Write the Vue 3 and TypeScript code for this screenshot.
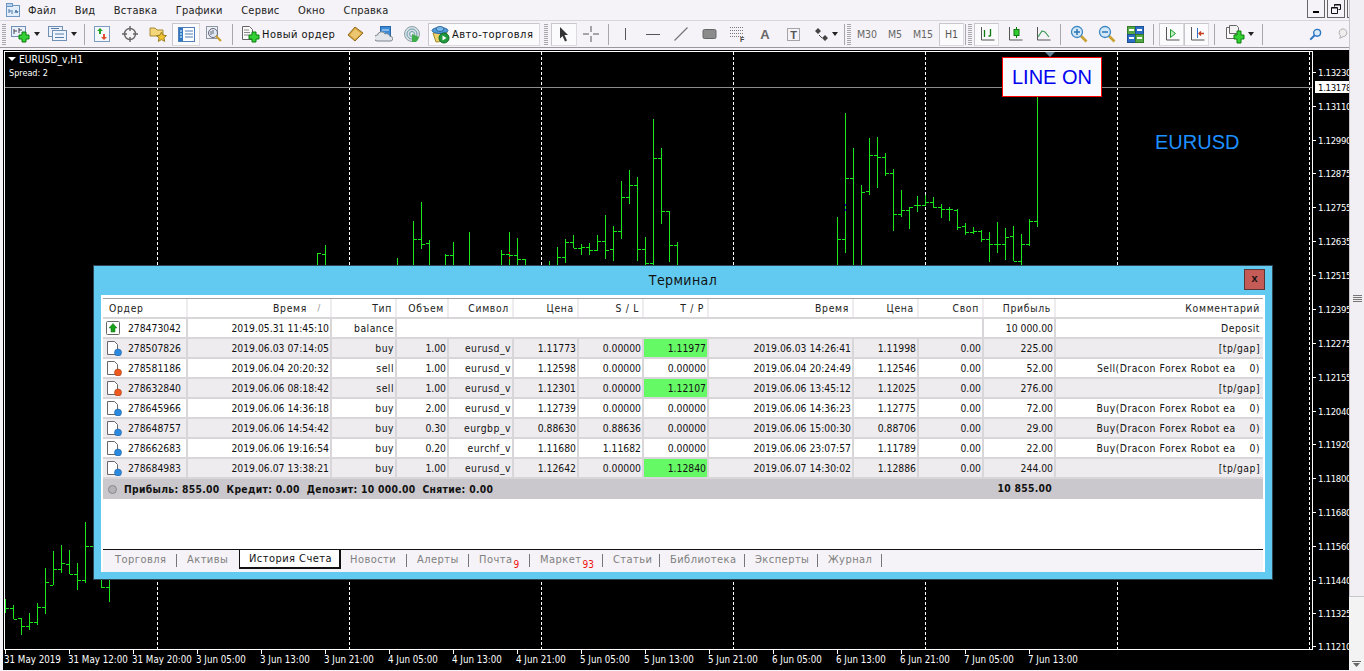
<script setup lang="ts">
const menu = ['Файл', 'Вид', 'Вставка', 'Графики', 'Сервис', 'Окно', 'Справка'];

// x, high, low, open, close (pixel places on the chart canvas)
type Bar = [number, number, number, number | null, number | null];
const bars: Bar[] = [
  [5, 599, 613, null, 608], [13, 605, 619, 608, 619], [21, 618, 635, 618, 626], [29, 613, 630, 626, 622],
  [37, 603, 625, 622, 607], [45, 568, 614, 607, 582], [53, 551, 585, 585, 569], [61, 545, 573, 569, 563],
  [69, 550, 574, 564, 574], [77, 563, 590, 574, 580], [85, 522, 583, 580, 546], [93, 530, 560, 546, null],
  [101, 570, 588, null, 587], [109, 570, 602, 587, null],
  [317, 253, 270, null, 253], [325, 245, 270, 254, null], [397, 258, 270, null, null],
  [413, 221, 270, null, 239], [421, 202, 249, 239, 244], [429, 240, 270, 243, null],
  [445, 254, 270, null, 255], [453, 242, 270, 255, null], [469, 232, 270, null, null],
  [501, 250, 270, null, 254], [509, 232, 270, 254, 255], [517, 238, 270, 255, 259], [525, 259, 270, 259, null],
  [549, 261, 270, null, null], [557, 247, 270, null, 257], [565, 239, 263, 257, 242], [573, 235, 248, 242, 248],
  [581, 244, 255, 248, 247], [589, 243, 255, 247, 250], [597, 235, 251, 250, 241], [605, 215, 259, 241, 250],
  [613, 226, 261, 249, 231], [621, 181, 239, 231, 197], [629, 170, 204, 197, 185], [637, 177, 261, 185, 249],
  [645, 237, 270, 249, 263], [653, 119, 270, 263, 158], [661, 148, 224, 158, 211], [669, 211, 262, 211, 245],
  [677, 242, 270, 245, null],
  [837, 217, 270, null, 239], [845, 113, 253, 239, 178], [853, 148, 270, 178, null], [861, 185, 270, null, 192],
  [869, 138, 195, 191, 155], [877, 137, 188, 155, 157], [885, 153, 176, 157, 173], [893, 169, 231, 173, 214],
  [901, 190, 217, 214, 210], [909, 207, 229, 210, 207], [917, 196, 212, 205, 205], [925, 195, 206, 205, 202],
  [933, 197, 208, 202, 207], [941, 204, 218, 207, 209], [949, 207, 221, 209, 209], [957, 209, 230, 210, 227],
  [965, 223, 235, 226, 232], [973, 227, 234, 232, 231], [981, 230, 242, 231, 239], [989, 232, 262, 239, 244],
  [997, 222, 253, 244, 244], [1005, 228, 260, 244, 237], [1013, 226, 261, 236, 261], [1021, 234, 270, 261, 244],
  [1029, 219, 246, 244, 221], [1037, 97, 227, 221, null],
];

const barPath = bars
  .map(([x, hi, lo, open, close]) => {
    const cx = x + 0.5;
    let d = `M${cx} ${hi}V${lo}`;
    if (open !== null) d += `M${x - 3} ${open + 0.5}H${x}`;
    if (close !== null) d += `M${x + 1} ${close + 0.5}H${x + 4}`;
    return d;
  })
  .join('');

const gridLines = [157, 349, 541, 733, 925, 1117, 1309];

const prices: [string, number][] = [
  ['1.13230', 72], ['1.13110', 106], ['1.12990', 140], ['1.12875', 173], ['1.12755', 207], ['1.12635', 241],
  ['1.12515', 275], ['1.12395', 309], ['1.12275', 343], ['1.12155', 377], ['1.12040', 411], ['1.11920', 444],
  ['1.11800', 478], ['1.11680', 512], ['1.11560', 546], ['1.11440', 580], ['1.11325', 613], ['1.11210', 646],
];

const times = [
  '31 May 2019', '31 May 12:00', '31 May 20:00', '3 Jun 05:00', '3 Jun 13:00', '3 Jun 21:00', '4 Jun 05:00',
  '4 Jun 13:00', '4 Jun 21:00', '5 Jun 05:00', '5 Jun 13:00', '5 Jun 21:00', '6 Jun 05:00', '6 Jun 13:00',
  '6 Jun 21:00', '7 Jun 05:00', '7 Jun 13:00',
];

const columns = [
  { label: 'Время', extra: '/' }, { label: 'Тип' }, { label: 'Объем' }, { label: 'Символ' }, { label: 'Цена' },
  { label: 'S / L' }, { label: 'T / P' }, { label: 'Время' }, { label: 'Цена' }, { label: 'Своп' },
  { label: 'Прибыль' }, { label: 'Комментарий' },
];

interface Deal {
  order: string;
  time: string;
  type: string;
  volume: string;
  symbol: string;
  price: string;
  sl: string;
  tp: string;
  closeTime: string;
  closePrice: string;
  swap: string;
  profit: string;
  comment: string;
  tpHit?: boolean;
}

const ea = (side: string) => `${side}(Dracon Forex Robot ea    0)`;

const deals: Deal[] = [
  { order: '278507826', time: '2019.06.03 07:14:05', type: 'buy', volume: '1.00', symbol: 'eurusd_v', price: '1.11773', sl: '0.00000', tp: '1.11977', closeTime: '2019.06.03 14:26:41', closePrice: '1.11998', swap: '0.00', profit: '225.00', comment: '[tp/gap]', tpHit: true },
  { order: '278581186', time: '2019.06.04 20:20:32', type: 'sell', volume: '1.00', symbol: 'eurusd_v', price: '1.12598', sl: '0.00000', tp: '0.00000', closeTime: '2019.06.04 20:24:49', closePrice: '1.12546', swap: '0.00', profit: '52.00', comment: ea('Sell') },
  { order: '278632840', time: '2019.06.06 08:18:42', type: 'sell', volume: '1.00', symbol: 'eurusd_v', price: '1.12301', sl: '0.00000', tp: '1.12107', closeTime: '2019.06.06 13:45:12', closePrice: '1.12025', swap: '0.00', profit: '276.00', comment: '[tp/gap]', tpHit: true },
  { order: '278645966', time: '2019.06.06 14:36:18', type: 'buy', volume: '2.00', symbol: 'eurusd_v', price: '1.12739', sl: '0.00000', tp: '0.00000', closeTime: '2019.06.06 14:36:23', closePrice: '1.12775', swap: '0.00', profit: '72.00', comment: ea('Buy') },
  { order: '278648757', time: '2019.06.06 14:54:42', type: 'buy', volume: '0.30', symbol: 'eurgbp_v', price: '0.88630', sl: '0.88636', tp: '0.00000', closeTime: '2019.06.06 15:00:30', closePrice: '0.88706', swap: '0.00', profit: '29.00', comment: ea('Buy') },
  { order: '278662683', time: '2019.06.06 19:16:54', type: 'buy', volume: '0.20', symbol: 'eurchf_v', price: '1.11680', sl: '1.11682', tp: '0.00000', closeTime: '2019.06.06 23:07:57', closePrice: '1.11789', swap: '0.00', profit: '22.00', comment: ea('Buy') },
  { order: '278684983', time: '2019.06.07 13:38:21', type: 'buy', volume: '1.00', symbol: 'eurusd_v', price: '1.12642', sl: '0.00000', tp: '1.12840', closeTime: '2019.06.07 14:30:02', closePrice: '1.12886', swap: '0.00', profit: '244.00', comment: '[tp/gap]', tpHit: true },
];

const tabs = [
  { label: 'Торговля', width: 75, pad: 12 },
  { label: 'Активы', width: 61, pad: 9, plain: true },
  { label: 'История Счета', width: 102, pad: 9, active: true },
  { label: 'Новости', width: 67, pad: 9 },
  { label: 'Алерты', width: 62, pad: 9 },
  { label: 'Почта', width: 61, pad: 9, badge: '9' },
  { label: 'Маркет', width: 73, pad: 9, badge: '93' },
  { label: 'Статьи', width: 57, pad: 9 },
  { label: 'Библиотека', width: 85, pad: 9 },
  { label: 'Эксперты', width: 73, pad: 9 },
  { label: 'Журнал', width: 64, pad: 9 },
];
</script>

<template>
  <div class="app">
    <div class="main">
      <div class="menubar">
        <svg class="app-icon" width="16" height="16" viewBox="0 0 16 16">
          <rect x="1.5" y="3.5" width="13" height="11" fill="#e4eefa" stroke="#6f97c4" />
          <rect x="1.5" y="1.5" width="6" height="3" fill="#b9d2ee" stroke="#6f97c4" />
          <path d="M4 11V7M4 9h2M7 12V8M10 11l1-3 1 3 1-2" fill="none" stroke="#4a74a6" />
        </svg>
        <span v-for="item in menu" :key="item" class="menu-item">{{ item }}</span>
        <div class="win-btns">
          <span class="win-btn"><svg width="8" height="8" viewBox="0 0 8 8"><path d="M1 6h6v2H1z" /></svg></span>
          <span class="win-btn"><svg width="10" height="10" viewBox="0 0 10 10"><path d="M3.5 2.5v-2h6v5h-2M.5 3.5h6v6h-6z M.5 4h6M3.5 1h6" fill="none" stroke="#111" /></svg></span>
          <span class="win-btn clipped"></span>
        </div>
      </div>

      <div class="toolbar">
        <i class="grip first"></i>
        <span class="tb drop">
          <svg width="20" height="18" viewBox="0 0 20 18"><rect x=".5" y="1.5" width="14" height="10" fill="#eaf1fa" stroke="#6f8fb4" /><path d="M3 4v5M3 6h3M8 3v5M8 5h3" stroke="#445" fill="none" /><path d="M11 7h4v3h3v4h-3v3h-4v-3H8v-4h3z" fill="#33d133" stroke="#0c7c0c" /></svg>
          <i class="caret"></i>
        </span>
        <span class="tb drop second">
          <svg width="20" height="18" viewBox="0 0 20 18"><rect x=".5" y="1.5" width="14" height="10" fill="#eaf1fa" stroke="#6f8fb4" /><rect x="4.5" y="5.5" width="14" height="10" fill="#eef4fb" stroke="#6f8fb4" /><path d="M3 3.5h8M7 9h9M7 12.500h9" stroke="#5a7ea8" fill="none" /></svg>
          <i class="caret"></i>
        </span>
        <i class="sep sep-a"></i>
        <span class="tb">
          <svg width="18" height="18" viewBox="0 0 18 18"><rect x="1.500" y="1.500" width="15" height="15" fill="#f4f7fc" stroke="#7d9cc2" /><path d="M6 9V6H4l3-3 3 3H8v3z" fill="#27a327" /><path d="M10 9v3H8l3 3 3-3h-2V9z" fill="#e0502a" /></svg>
        </span>
        <span class="tb">
          <svg width="18" height="18" viewBox="0 0 18 18"><circle cx="9" cy="9" r="5.500" fill="none" stroke="#666" stroke-width="1.400" /><path d="M9 1v5M9 12v5M1 9h5M12 9h5" stroke="#666" stroke-width="1.400" /></svg>
        </span>
        <span class="tb">
          <svg width="18" height="18" viewBox="0 0 18 18"><path d="M1 3h5l2 2h6v6H1z" fill="#f3d77a" stroke="#a98a35" /><path d="M12.500 7l1.500 3.200 3.500.4-2.600 2.300.8 3.500-3.200-1.800-3.200 1.800.8-3.500-2.600-2.300 3.500-.4z" fill="#f2c230" stroke="#9c7f1e" /></svg>
        </span>
        <span class="tb pressed">
          <svg width="17" height="17" viewBox="0 0 17 17"><rect x=".5" y="1.500" width="16" height="14" fill="#fff" stroke="#4f7fb8" /><rect x="1" y="2" width="4" height="13" fill="#2f79c4" /><path d="M7 5h8M7 8h8M7 11h8" stroke="#4f7fb8" /><path d="M2 5h2M2 8h2M2 11h2" stroke="#fff" /></svg>
        </span>
        <span class="tb">
          <svg width="18" height="18" viewBox="0 0 18 18"><rect x="1.500" y="1.500" width="11" height="12" fill="#eef1f6" stroke="#8d97a6" /><circle cx="8" cy="8" r="4.500" fill="#dfe9f5" stroke="#667" /><path d="M11 11l5 5" stroke="#c9a032" stroke-width="2.200" /><path d="M6 10V6M8 9V5" stroke="#667" /></svg>
        </span>
        <i class="sep sep-b"></i>
        <span class="tb order">
          <svg width="19" height="18" viewBox="0 0 19 18"><path d="M1.500 1.500h7l3 3v10h-10z" fill="#fbfbfb" stroke="#666" /><path d="M3 5h5M3 7.500h6M3 10h5" stroke="#888" /><path d="M11 7h4v3h3v4h-3v3h-4v-3H8v-4h3z" fill="#33d133" stroke="#0c7c0c" /></svg>
          <span class="tb-text">Новый ордер</span>
        </span>
        <span class="tb">
          <svg width="18" height="18" viewBox="0 0 18 18"><path d="M1 10l7-8 8 6-8 8z" fill="#d9a63e" stroke="#8d6a1d" /><path d="M3 10l5-6 6 4.500-6 5.500z" fill="#edc672" /></svg>
        </span>
        <span class="tb">
          <svg width="18" height="18" viewBox="0 0 18 18"><rect x="5.500" y="1.500" width="10" height="11" fill="#3c8ad6" stroke="#2467ad" /><path d="M7 5h7M7 8h3" stroke="#cfe4f8" /><path d="M2 16a3 3 0 0 1 .5-6 4 4 0 0 1 7.500-1 3.500 3.500 0 0 1 5 2.500 2.300 2.300 0 0 1 1 4.500z" fill="#e2e6ea" stroke="#7c858e" /></svg>
        </span>
        <span class="tb">
          <svg width="18" height="18" viewBox="0 0 18 18"><circle cx="9" cy="9" r="7.500" fill="#d6e0e4" stroke="#8ea0a8" /><circle cx="9" cy="9" r="5" fill="none" stroke="#6f9fb0" /><circle cx="9" cy="9" r="2.500" fill="#dfe9ec" stroke="#6f9fb0" /><path d="M9 9v8h4a8 8 0 0 0 3-5z" fill="#3fae4a" /></svg>
        </span>
        <span class="tb pressed auto">
          <svg width="19" height="19" viewBox="0 0 19 19"><path d="M2 8l14-1-2 9-9 1z" fill="#f0d268" stroke="#a08a2c" /><ellipse cx="9" cy="5.500" rx="8" ry="3" fill="#4f9bdc" stroke="#2c6aa3" /><ellipse cx="9" cy="4" rx="4" ry="2.500" fill="#7ab8ea" stroke="#2c6aa3" /><circle cx="13" cy="13" r="5" fill="#1f9a3c" stroke="#0f6a24" /><path d="M11.500 10.500v5l4-2.500z" fill="#fff" /></svg>
          <span class="tb-text">Авто-торговля</span>
        </span>
        <i class="grip grip-a"></i>
        <span class="tb pressed arrow">
          <svg width="14" height="18" viewBox="0 0 14 18"><path d="M3 2l8 8H7.500l2.500 5.500-2 1L5.500 11 3 13.500z" fill="#333" /></svg>
        </span>
        <span class="tb">
          <svg width="16" height="16" viewBox="0 0 16 16"><path d="M8 0v6M8 10v6M0 8h6M10 8h6" stroke="#555" /></svg>
        </span>
        <i class="sep sep-c"></i>
        <span class="tb draw">
          <svg width="16" height="16" viewBox="0 0 16 16"><path d="M8.500 2v12" stroke="#555" /></svg>
        </span>
        <span class="tb draw">
          <svg width="16" height="16" viewBox="0 0 16 16"><path d="M1 8.500h14" stroke="#555" /></svg>
        </span>
        <span class="tb draw">
          <svg width="16" height="16" viewBox="0 0 16 16"><path d="M1.500 14.500l13-13" stroke="#777" stroke-width="1.200" /></svg>
        </span>
        <span class="tb draw">
          <svg width="15" height="12" viewBox="0 0 15 12"><rect x="1" y="1.500" width="13" height="9" rx="1.500" fill="#8b8b8b" stroke="#666" /></svg>
        </span>
        <span class="tb draw">
          <svg width="16" height="16" viewBox="0 0 16 16"><path d="M1 1.500h13M1 4.500h13M1 7.500h13M1 10.500h13" stroke="#777" stroke-dasharray="1 1" /><text x="11" y="16" class="icon-f">F</text></svg>
        </span>
        <span class="tb draw"><span class="icon-a">A</span></span>
        <span class="tb draw">
          <svg width="15" height="15" viewBox="0 0 15 15"><rect x="1.500" y="1.500" width="12" height="12" fill="none" stroke="#555" stroke-dasharray="1 1" /><text x="7.500" y="12" class="icon-t">T</text></svg>
        </span>
        <span class="tb draw drop">
          <svg width="15" height="15" viewBox="0 0 15 15"><path d="M4 1l3 3-3 3-3-3zM11 8l3 3-3 3-3-3z" fill="#444" /><path d="M5 8l3 3" stroke="#444" /></svg>
          <i class="caret"></i>
        </span>
        <i class="sep sep-d"></i>
        <i class="grip grip-b"></i>
        <span class="tf">M30</span>
        <span class="tf">M5</span>
        <span class="tf">M15</span>
        <span class="tf pressed h1">H1</span>
        <i class="sep sep-e"></i>
        <i class="grip grip-c"></i>
        <span class="tb pressed view">
          <svg width="16" height="16" viewBox="0 0 16 16"><path d="M2.500 1v13h13" fill="none" stroke="#555" /><path d="M5.500 4v7M11.500 3v7M9.500 10h2" fill="none" stroke="#0c7c0c" stroke-width="1.300" /></svg>
        </span>
        <span class="tb view-b">
          <svg width="16" height="16" viewBox="0 0 16 16"><path d="M2.500 1v13h13" fill="none" stroke="#555" /><path d="M9.500 1v11" stroke="#0c7c0c" /><rect x="7" y="3.500" width="5" height="6" fill="#33c933" stroke="#0c7c0c" /></svg>
        </span>
        <span class="tb">
          <svg width="16" height="16" viewBox="0 0 16 16"><path d="M2.500 1v13h13" fill="none" stroke="#555" /><path d="M3 11l4-6 3 1 4 5" fill="none" stroke="#3f9a5a" stroke-width="1.200" /></svg>
        </span>
        <i class="sep sep-f"></i>
        <span class="tb">
          <svg width="18" height="18" viewBox="0 0 18 18"><path d="M10.500 10.500l6 6" stroke="#c9a032" stroke-width="2.600" /><circle cx="7" cy="7" r="5.500" fill="#d4e8f7" stroke="#3b86c4" stroke-width="1.300" /><path d="M4 7h6M7 4v6" stroke="#2a74b4" stroke-width="1.500" /></svg>
        </span>
        <span class="tb">
          <svg width="18" height="18" viewBox="0 0 18 18"><path d="M10.500 10.500l6 6" stroke="#c9a032" stroke-width="2.600" /><circle cx="7" cy="7" r="5.500" fill="#d4e8f7" stroke="#3b86c4" stroke-width="1.300" /><path d="M4 7h6" stroke="#2a74b4" stroke-width="1.500" /></svg>
        </span>
        <span class="tb">
          <svg width="17" height="17" viewBox="0 0 17 17"><rect x=".5" y=".5" width="8" height="8" fill="#56a845" stroke="#357a2a" /><rect x="8.500" y=".5" width="8" height="8" fill="#2c6fc4" stroke="#1d4f92" /><rect x=".5" y="8.500" width="8" height="8" fill="#2c6fc4" stroke="#1d4f92" /><rect x="8.500" y="8.500" width="8" height="8" fill="#56a845" stroke="#357a2a" /><path d="M2 4h5M10 4h5M2 12h5M10 12h5" stroke="#fff" stroke-width="2" /></svg>
        </span>
        <i class="sep sep-g"></i>
        <span class="tb pressed view">
          <svg width="16" height="16" viewBox="0 0 16 16"><path d="M2.500 1v13h13" fill="none" stroke="#555" /><path d="M6.500 3.500l5 4-5 4z" fill="#bff0bf" stroke="#1f9a2f" /></svg>
        </span>
        <span class="tb pressed view gap-2">
          <svg width="16" height="16" viewBox="0 0 16 16"><path d="M2.500 1v13h13" fill="none" stroke="#555" /><path d="M8.500 2v10" stroke="#2c6fc4" /><path d="M15 7.500H10M12 5.500l-2 2 2 2" fill="none" stroke="#c8401e" stroke-width="1.300" /></svg>
        </span>
        <i class="sep sep-h"></i>
        <span class="tb drop">
          <svg width="20" height="20" viewBox="0 0 20 20"><path d="M1.500 3.500h7l2 2v9h-9z" fill="#fbfbfb" stroke="#666" /><path d="M4.500 1.500h7l2 2v6h-9z" fill="#f2f2f2" stroke="#666" /><path d="M12 7h4v4h3v4h-3v4h-4v-4H9v-4h3z" fill="#33d133" stroke="#0c7c0c" /></svg>
          <i class="caret"></i>
        </span>
        <i class="sep sep-i"></i>
        <svg class="search" width="15" height="15" viewBox="0 0 15 15"><circle cx="9.500" cy="5.500" r="4" fill="#dcebf8" stroke="#2a74c4" stroke-width="1.600" /><path d="M6.500 8.500L1.500 13.500" stroke="#2a74c4" stroke-width="2.400" /></svg>
        <svg class="bubble" width="13" height="15" viewBox="0 0 13 15"><path d="M2 12l1-3a4.500 4.500 0 1 1 3 1z" fill="#eee" stroke="#a4a4a4" /></svg>
      </div>

      <div class="chart">
        <svg class="chart-canvas" width="1346" height="620" viewBox="3 50 1346 620">
          <path v-for="x in gridLines" :key="x" :d="`M${x + 0.5} 52V649`" class="grid-line" />
          <path d="M5 87.500H1312" class="price-line" />
          <rect x="4.500" y="51.500" width="1308" height="598" class="frame" />
          <path :d="barPath" class="bars" />
          <path d="M509.500 252v10" class="mark-red" />
          <path d="M845.500 204v9" class="mark-blue" />
          <g v-for="[label, y] in prices" :key="label">
            <path :d="`M1313 ${y + 0.5}h3`" class="tick" />
            <text x="1318" :y="y + 4" class="axis-text price">{{ label }}</text>
          </g>
          <rect x="1315" y="81" width="34" height="12" fill="#fff" />
          <text x="1318" y="91" class="axis-text price current">1.13178</text>
          <g v-for="(label, i) in times" :key="i">
            <path :d="`M${5.5 + 64 * i} 650v4`" class="tick" />
            <text :x="4 + 64 * i" y="663" class="axis-text time">{{ label }}</text>
          </g>
          <path d="M1045 52h10l-5 5z" fill="#5f7f95" />
          <path d="M8 57h8l-4 4z" fill="#fff" />
          <text x="19" y="63" class="axis-text">EURUSD_v,H1</text>
          <text x="9" y="76" class="axis-text spread">Spread: 2</text>
          <text x="1155" y="149" class="eurusd">EURUSD</text>
        </svg>
        <button class="line-btn">LINE ON</button>
      </div>
    </div>

    <div class="scrollbar">
      <div class="thumb"><i class="thumb-grip"></i></div>
      <svg class="scroll-arrow" width="9" height="6" viewBox="0 0 9 6"><path d="M0 0h9v1H0zM1 2h7L4.500 6z" fill="#666" /></svg>
    </div>

    <section class="terminal">
      <header class="term-title">
        <span>Терминал</span>
        <button class="term-close">x</button>
      </header>
      <div class="term-panel">
        <div class="row head">
          <div class="cell order-head">Ордер</div>
          <div v-for="(col, i) in columns" :key="i" class="cell">
            <span v-if="col.extra" class="sort">{{ col.extra }}</span>{{ col.label }}
          </div>
        </div>

        <div class="row">
          <div class="cell order-cell">
            <svg width="16" height="16" viewBox="0 0 16 16"><rect x=".5" y="1.500" width="13" height="13" rx="1" fill="#fff" stroke="#666" /><path d="M7 3.500l4 4.500H9v4H5V8H3z" fill="#18a018" stroke="#0c700c" stroke-width=".5" /></svg>
            278473042
          </div>
          <div class="cell">2019.05.31 11:45:10</div>
          <div class="cell word">balance</div>
          <div class="cell span-8"></div>
          <div class="cell">10 000.00</div>
          <div class="cell word comment">Deposit</div>
        </div>

        <div v-for="(deal, i) in deals" :key="deal.order" class="row" :class="{ alt: i % 2 === 0 }">
          <div class="cell order-cell">
            <svg width="16" height="16" viewBox="0 0 16 16"><path d="M1.500 1.500h7l3 3v10h-10z" fill="#fff" stroke="#666" /><circle cx="12" cy="12.500" r="3.500" :fill="deal.type === 'buy' ? '#2a8ae0' : '#ee5a1e'" :stroke="deal.type === 'buy' ? '#1c5f9e' : '#a83a10'" stroke-width=".6" /></svg>
            {{ deal.order }}
          </div>
          <div class="cell">{{ deal.time }}</div>
          <div class="cell word">{{ deal.type }}</div>
          <div class="cell">{{ deal.volume }}</div>
          <div class="cell word">{{ deal.symbol }}</div>
          <div class="cell">{{ deal.price }}</div>
          <div class="cell">{{ deal.sl }}</div>
          <div class="cell" :class="{ hit: deal.tpHit }">{{ deal.tp }}</div>
          <div class="cell">{{ deal.closeTime }}</div>
          <div class="cell">{{ deal.closePrice }}</div>
          <div class="cell">{{ deal.swap }}</div>
          <div class="cell">{{ deal.profit }}</div>
          <div class="cell word comment">{{ deal.comment }}</div>
        </div>

        <div class="row summary">
          <div class="summary-text">
            <i class="dot"></i>
            <span>Прибыль: 855.00</span>
            <span>Кредит: 0.00</span>
            <span>Депозит: 10 000.00</span>
            <span>Снятие: 0.00</span>
          </div>
          <div class="summary-total">10 855.00</div>
        </div>

        <div class="tabs">
          <div
            v-for="tab in tabs"
            :key="tab.label"
            class="tab"
            :class="{ active: tab.active, plain: tab.plain }"
            :style="{ width: `${tab.width}px`, paddingLeft: `${tab.pad}px` }"
          >
            {{ tab.label }}<sub v-if="tab.badge" class="badge">{{ tab.badge }}</sub>
          </div>
        </div>
      </div>
    </section>
  </div>
</template>

<style scoped>
.app {
  position: relative;
  display: flex;
  width: 1364px;
  height: 671px;
  overflow: hidden;
  background: #f5f3f7;
  font-family: 'DejaVu Sans Condensed', 'Liberation Sans', sans-serif;
  font-stretch: condensed;
  font-size: 10.3px;
  color: #111;
}

.main {
  width: 1349px;
  display: flex;
  flex-direction: column;
}

/* меню */
.menubar {
  display: flex;
  align-items: center;
  height: 20px;
  padding-left: 5px;
}

.app-icon {
  margin-right: 7px;
}

.menu-item {
  margin-right: 18.5px;
  font-size: 11px;
  letter-spacing: 0.2px;
  color: #222;
}

.win-btns {
  display: flex;
  gap: 2px;
  margin-left: auto;
  align-self: flex-start;
}

.win-btn {
  display: flex;
  align-items: center;
  justify-content: center;
  width: 18px;
  height: 18px;
  border: 1px solid #666;
  border-top: 0;
  box-sizing: border-box;
}

.win-btn.clipped {
  width: 2px;
  border-right: 0;
}

/* панель инструментов */
.toolbar {
  display: flex;
  align-items: center;
  height: 26px;
  border-top: 1px solid #d8d6da;
  border-bottom: 1px solid #9a989c;
  box-sizing: content-box;
}

.tb,
.tf {
  flex: none;
  display: flex;
  align-items: center;
  justify-content: center;
  width: 28px;
  height: 23px;
  box-sizing: border-box;
}

.tb.pressed,
.tf.pressed {
  background: #fbfafc;
  border: 1px solid #dcdade;
  border-top-color: #c9c7cb;
  border-left-color: #c9c7cb;
}

.tb-text {
  white-space: nowrap;
  margin-left: 2px;
  font-size: 11px;
  letter-spacing: 0.45px;
}

.drop {
  width: 37px;
  gap: 3px;
  margin-left: 6px;
}

.second {
  margin-left: 0;
}

.caret {
  width: 0;
  height: 0;
  border: 3px solid transparent;
  border-top: 4px solid #222;
  border-bottom: 0;
}

.grip {
  flex: none;
  width: 4px;
  height: 21px;
  background: repeating-linear-gradient(#a9a7ab 0 1px, transparent 1px 2px);
}

.grip.first {
  margin-left: 2px;
  margin-right: -5px;
}

.sep {
  flex: none;
  width: 1px;
  height: 21px;
  background: #a9a7ab;
}

.sep-a { margin: 0 3px 0 3px; }
.sep-b { margin: 0 7px 0 4px; }
.order { width: 98px; justify-content: flex-start; padding-left: 1px; margin-right: 4px; }
.auto { width: 112px; margin-left: 2px; justify-content: flex-start; padding-left: 2px; }
.grip-a { margin: 0 3px 0 4px; }
.arrow { width: 26px; }
.sep-c { margin: 0 2px 0 3px; }
.draw { width: 28px; }
.draw.drop { width: 37px; margin-left: 0; gap: 3px; }
.sep-d { margin-left: 0; }
.grip-b { margin: 0 2px 0 2px; }

.tf {
  color: #666;
  font-size: 10.5px;
}

.h1 {
  width: 25px;
  margin-left: 2px;
  color: #555;
}

.sep-e { margin-left: 1px; }
.grip-c { margin: 0 2px 0 2px; }
.view { width: 25px; }
.view-b { margin-left: 2px; }
.sep-f { margin: 0 4px 0 3px; }
.sep-g { margin: 0 5px 0 4px; }
.gap-2 { margin-left: 0; }
.sep-h { margin: 0 0 0 5px; }
.sep-i { margin-left: 4px; }

.search {
  margin-left: 46px;
}

.bubble {
  margin-left: 16px;
}

.icon-f {
  font: bold 7px 'Liberation Sans', sans-serif;
  fill: #444;
}

.icon-a {
  font: bold 13px 'Liberation Sans', sans-serif;
  color: #666;
}

.icon-t {
  font: bold 11px 'Liberation Sans', sans-serif;
  fill: #555;
  text-anchor: middle;
}

/* график */
.chart {
  position: relative;
  flex: none;
  height: 620px;
  margin-top: 2px;
  margin-left: 3px;
  background: #000;
}

.chart-canvas {
  display: block;
}

.grid-line {
  stroke: #fff;
  stroke-dasharray: 3 2;
}

.price-line {
  stroke: #8a8a8a;
}

.frame {
  fill: none;
  stroke: #fff;
}

.bars {
  fill: none;
  stroke: #1be51b;
}

.mark-red {
  stroke: #e01010;
  stroke-dasharray: 2 3;
}

.mark-blue {
  stroke: #1010d0;
  stroke-dasharray: 2 3;
}

.tick {
  stroke: #fff;
}

.axis-text {
  fill: #fff;
  font-size: 10.2px;
}

.axis-text.price {
  font-size: 9.5px;
  letter-spacing: -0.3px;
}

.axis-text.time {
  font-size: 9.7px;
}

.axis-text.spread {
  font-size: 9px;
}

.axis-text.current {
  fill: #000;
}

.eurusd {
  fill: #1e90ff;
  font: 20px 'Liberation Sans', sans-serif;
}

.line-btn {
  position: absolute;
  left: 999px;
  top: 7px;
  width: 100px;
  height: 40px;
  padding: 0;
  border: 1px solid #f00;
  background: #f8faff;
  color: #0000f0;
  font: 20px 'Liberation Sans', sans-serif;
}

/* полоса прокрутки */
.scrollbar {
  display: flex;
  flex-direction: column;
  align-items: center;
  width: 15px;
  height: 669px;
  background: #f3f3f3;
}

.thumb {
  display: flex;
  align-items: center;
  justify-content: center;
  width: 100%;
  height: 597px;
  background: #f1eff3;
  border-left: 1px solid #c9c7cb;
  border-bottom: 1px solid #c9c7cb;
  box-sizing: border-box;
}

.thumb-grip {
  width: 9px;
  height: 7px;
  background: repeating-linear-gradient(#777 0 1px, #eee 1px 2px);
}

.scroll-arrow {
  margin-top: auto;
  margin-bottom: 2px;
}

/* окно терминала */
.terminal {
  position: absolute;
  left: 93px;
  top: 265px;
  display: flex;
  flex-direction: column;
  width: 1180px;
  height: 315px;
  padding: 0 7px 7px;
  background: #62caf0;
  border: 1px solid #2d4552;
  box-sizing: border-box;
}

.term-title {
  position: relative;
  flex: none;
  height: 29px;
  text-align: center;
  line-height: 29px;
  font-size: 14px;
  letter-spacing: 0.4px;
  color: #111;
}

.term-close {
  position: absolute;
  right: 0;
  top: 3px;
  width: 21px;
  height: 21px;
  padding: 0 0 3px;
  background: #c55b57;
  border: 1px solid #5b3634;
  font: bold 11px 'Liberation Sans', sans-serif;
  color: #111;
}

.term-panel {
  flex: 1;
  display: flex;
  flex-direction: column;
  padding: 3px 2px 0;
  background: #fff;
}

.row {
  flex: none;
  display: grid;
  grid-template-columns: 85px 144px 65px 52px 65px 65px 65px 65px 145px 65px 65px 72px 207px;
  height: 20px;
  border-bottom: 2px solid #d9d6d9;
  box-sizing: border-box;
  background: #fff;
}

.row.alt {
  background: #efecef;
}

.cell {
  position: relative;
  padding-right: 1px;
  border-right: 2px solid #d9d6d9;
  text-align: right;
  line-height: 18px;
  white-space: pre;
  overflow: hidden;
}

.cell:last-child {
  border-right: 0;
}

.word {
  letter-spacing: 0.5px;
}

.comment {
  padding-right: 3px;
}

.head {
  height: 21px;
  border-top: 1px solid #a4a1a4;
  background: #fff;
}

.head .cell {
  padding-right: 3px;
  border-right-color: #efecef;
  letter-spacing: 0.7px;
  color: #222;
}

.order-head {
  padding-left: 6px;
  text-align: left;
}

.sort {
  position: absolute;
  right: 9px;
  top: 0;
  color: #888;
  font-size: 9px;
}

.head .cell:nth-child(2) {
  padding-right: 23px;
}

.order-cell {
  display: flex;
  align-items: center;
  gap: 3px;
  padding-left: 3px;
  text-align: left;
}

.span-8 {
  grid-column: span 8;
}

.hit {
  background: #66f966;
}

.summary {
  border-bottom: 0;
  background: #cac8cc;
  font-weight: 700;
  letter-spacing: 0.3px;
}

.summary-text {
  grid-column: span 11;
  display: flex;
  align-items: center;
  gap: 7px;
  padding-left: 5px;
  white-space: nowrap;
}

.dot {
  width: 7px;
  height: 7px;
  border: 1px solid #888;
  border-radius: 50%;
  background: #b4b2b6;
}

.summary-total {
  padding-right: 4px;
  text-align: right;
  line-height: 19px;
}

/* вкладки */
.tabs {
  flex: none;
  display: flex;
  height: 23px;
  margin-top: auto;
  border-top: 1px solid #111;
  box-sizing: border-box;
  background: #f5f3f7;
}

.tab {
  position: relative;
  box-sizing: border-box;
  line-height: 20px;
  font-size: 11px;
  letter-spacing: 0.45px;
  color: #808080;
  white-space: nowrap;
}

.tab::after {
  content: '';
  position: absolute;
  right: 1px;
  top: 4px;
  width: 1px;
  height: 13px;
  background: #777;
}

.tab.plain::after,
.tab.active::after {
  display: none;
}

.tab.active {
  height: 19px;
  background: #fff;
  border-left: 1px solid #111;
  border-right: 2px solid #111;
  border-bottom: 2px solid #111;
  color: #111;
  line-height: 18px;
}

.badge {
  position: absolute;
  margin-left: 1px;
  top: 5px;
  font-size: 10px;
  letter-spacing: 0;
  color: #f01010;
}
</style>

<style>
html,
body {
  margin: 0;
  overflow: hidden;
  background: #fff;
}
</style>
